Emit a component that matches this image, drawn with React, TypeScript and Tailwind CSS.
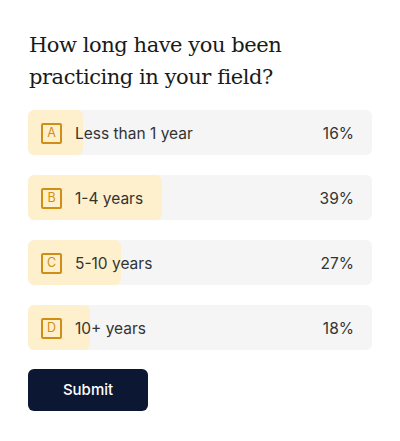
import React from "react";

const options = [
  { key: "A", label: "Less than 1 year", pct: 16 },
  { key: "B", label: "1-4 years", pct: 39 },
  { key: "C", label: "5-10 years", pct: 27 },
  { key: "D", label: "10+ years", pct: 18 },
];

export default function App() {
  return (
    <div className="w-[400px] h-[441px] bg-white px-[28px] pt-[29px]" style={{ fontFamily: "Inter, sans-serif" }}>
      <h1
        className="text-[21px] leading-[32px] text-[#1a1a1a] pl-[1px] tracking-[-0.45px]"
        style={{ fontFamily: '"DejaVu Serif", serif' }}
      >
        How long have you been
        <br />
        practicing in your field?
      </h1>
      <div className="mt-[17px] flex flex-col gap-[20px] w-[344px]">
        {options.map((o) => (
          <div key={o.key} className="relative h-[45px] rounded-[6px] bg-[#f5f5f5] overflow-hidden">
            <div className="absolute left-0 top-0 bottom-0 bg-[#fef0cc] rounded-[6px]" style={{ width: `${o.pct}%` }} />
            <div className="relative flex items-center h-full pl-[13px] pr-[18px] pt-[2px]">
              <div className="w-[21px] h-[21px] border-2 border-[#cf8e16] rounded-[2px] flex items-center justify-center text-[12.5px] text-[#cf8e16]">
                {o.key}
              </div>
              <div className="ml-[13px] text-[15.5px] text-[#333333]">{o.label}</div>
              <div className="ml-auto text-[15.5px] text-[#333333]">{o.pct}%</div>
            </div>
          </div>
        ))}
      </div>
      <button className="mt-[19px] w-[120px] h-[42px] rounded-[6px] bg-[#0c1733] text-white text-[15px] font-medium">
        Submit
      </button>
    </div>
  );
}
